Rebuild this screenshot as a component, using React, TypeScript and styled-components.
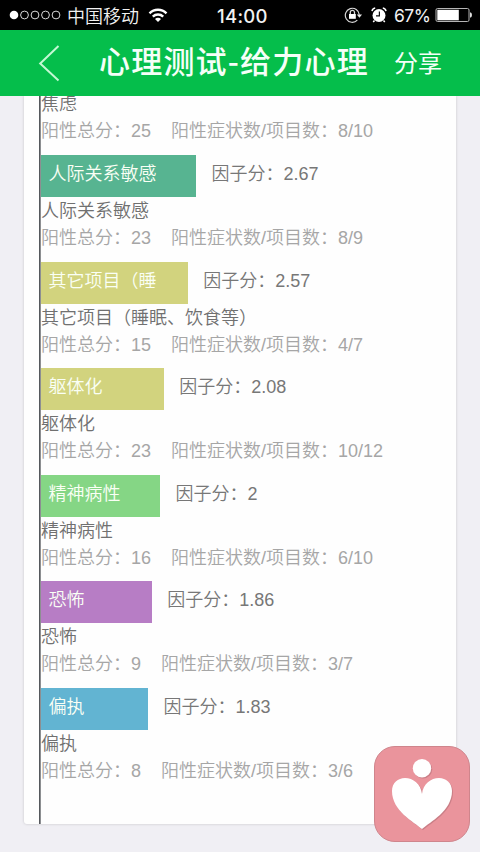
import React from 'react';
import styled, { createGlobalStyle } from 'styled-components';

const GlobalStyle = createGlobalStyle`
  * { box-sizing: border-box; }
  body {
    margin: 0;
    background: #f0eff4;
    font-family: "Liberation Sans", "Noto Sans CJK SC", sans-serif;
  }
`;

const Screen = styled.div`
  width: 480px;
  height: 852px;
  display: flex;
  flex-direction: column;
  overflow: hidden;
  background: #f0eff4;
`;

const StatusBar = styled.div`
  height: 30px;
  flex: none;
  display: flex;
  align-items: center;
  background: #000;
  color: #f2f2f2;
  font-size: 18px;
  line-height: 30px;
  white-space: nowrap;
`;

const Signal = styled.svg`
  width: 52px;
  height: 12px;
  margin-left: 9px;
`;

const Carrier = styled.span`
  width: 72px;
  margin: -1px 0 0 6px;
  font-family: "Noto Sans CJK SC", sans-serif;
  font-weight: 350;
`;

const Wifi = styled.svg`
  width: 20px;
  height: 15px;
  margin-left: 9px;
`;

const Clock = styled.span`
  width: 52px;
  margin: 1px 0 0 49px;
  font-family: Inter, sans-serif;
  font-weight: 500;
  font-size: 18.5px;
  letter-spacing: 0.3px;
`;

const StatusIcon = styled.svg<{ $gap: number }>`
  width: 18px;
  height: 18px;
  margin-left: ${(p) => p.$gap}px;
`;

const Percent = styled.span`
  width: 36px;
  margin: 2px 0 0 6px;
  font-family: Inter, sans-serif;
  font-size: 17.5px;
  letter-spacing: -0.5px;
`;

const Battery = styled.svg`
  width: 38px;
  height: 16px;
  margin-left: 5px;
`;

const NavBar = styled.header`
  height: 66px;
  flex: none;
  display: flex;
  align-items: center;
  background: #05be4b;
  color: #f5fff8;
  font-family: "Noto Sans CJK SC", sans-serif;
  white-space: nowrap;
`;

const BackIcon = styled.svg`
  width: 22px;
  height: 38px;
  margin-left: 38px;
`;

const Title = styled.h1`
  width: 270px;
  margin: -7px 0 0 39px;
  font-size: 31px;
  font-weight: 500;
  line-height: 40px;
  letter-spacing: 1.2px;
`;

const Share = styled.span`
  margin: -2px 0 0 25px;
  font-size: 24px;
  line-height: 36px;
`;

const Content = styled.main`
  flex: 1;
  min-height: 0;
  padding: 0 24px 27px;
  overflow: hidden;
`;

const Card = styled.section`
  height: 728px;
  padding-left: 15px;
  background: #fefefe;
  border-radius: 0 0 3px 3px;
  box-shadow: 0 0 3px rgba(0, 0, 0, 0.18);
`;

const Chart = styled.div`
  height: 728px;
  padding-left: 1px;
  border-left: 1px solid #55585d;
  box-shadow: inset 1px 0 #8d8f92;
  overflow: hidden;
`;

const Factor = styled.article<{ $clipped?: boolean }>`
  height: 106.6px;
  margin-top: ${(p) => (p.$clipped ? '-47.6px' : '0')};
  font-size: 18px;
  font-weight: 350;
  white-space: pre;
`;

const BarRow = styled.div`
  height: 42px;
  display: flex;
`;

const Bar = styled.div<{ $width: number; $color: string }>`
  width: ${(p) => p.$width}px;
  height: 42px;
  padding-left: 7.5px;
  background: ${(p) => p.$color};
  color: #fafff5;
  line-height: 38px;
`;

const Score = styled.span`
  margin-left: 15px;
  color: #777;
  line-height: 38px;
`;

const Name = styled.div`
  height: 27px;
  color: #707070;
  line-height: 29px;
`;

const Detail = styled.div`
  height: 27px;
  color: #a6a6a6;
  line-height: 29px;
`;

const FloatingButton = styled.button`
  position: absolute;
  left: 374px;
  top: 746px;
  width: 96px;
  height: 96px;
  padding: 0;
  border: 1px solid #cf858c;
  border-radius: 21px;
  background: #ea949c;
  svg { display: block; width: 94px; height: 94px; }
`;

interface FactorData {
  name: string;
  label: string;
  score: string;
  total: number;
  items: string;
  width: number;
  color: string;
}

const factors: FactorData[] = [
  { name: '人际关系敏感', label: '人际关系敏感', score: '2.67', total: 23, items: '8/9', width: 155.4, color: '#57b491' },
  { name: '其它项目（睡眠、饮食等）', label: '其它项目（睡', score: '2.57', total: 15, items: '4/7', width: 147.2, color: '#d2d37e' },
  { name: '躯体化', label: '躯体化', score: '2.08', total: 23, items: '10/12', width: 123.2, color: '#d2d37e' },
  { name: '精神病性', label: '精神病性', score: '2', total: 16, items: '6/10', width: 119.4, color: '#85d685' },
  { name: '恐怖', label: '恐怖', score: '1.86', total: 9, items: '3/7', width: 111.2, color: '#b77dc5' },
  { name: '偏执', label: '偏执', score: '1.83', total: 8, items: '3/6', width: 107.4, color: '#62b4d2' },
];

const anxiety: FactorData = {
  name: '焦虑', label: '', score: '', total: 25, items: '8/10', width: 0, color: 'transparent',
};

function FactorBlock({ data, clipped }: { data: FactorData; clipped?: boolean }) {
  return (
    <Factor $clipped={clipped}>
      <BarRow>
        {data.label && (
          <>
            <Bar $width={data.width} $color={data.color}>{data.label}</Bar>
            <Score>因子分：{data.score}</Score>
          </>
        )}
      </BarRow>
      <Name>{data.name}</Name>
      <Detail>{`阳性总分：${data.total}    阳性症状数/项目数：${data.items}`}</Detail>
    </Factor>
  );
}

export default function App() {
  return (
    <Screen>
      <GlobalStyle />
      <StatusBar>
        <Signal viewBox="0 0 52 12" fill="none" stroke="#d8d8d8">
          <circle cx="5" cy="6" r="4.3" fill="#fff" stroke="none" />
          {[15.5, 26, 36.5, 47].map((x) => <circle key={x} cx={x} cy="6" r="3.9" />)}
        </Signal>
        <Carrier>中国移动</Carrier>
        <Wifi viewBox="0 0 20 15" fill="none" stroke="#fff" strokeWidth="2.4">
          <path d="M1.5 5.3A12 12 0 0 1 18.5 5.3" />
          <path d="M4.8 8.6A7.4 7.4 0 0 1 15.2 8.6" />
          <path d="M7 10.9A4.2 4.2 0 0 1 13 10.9L10 14Z" fill="#fff" stroke="none" />
        </Wifi>
        <Clock>14:00</Clock>
        <StatusIcon $gap={75} viewBox="0 0 18 18" fill="none" stroke="#d8d8d8">
          <path d="M13.3 14.2A7 7 0 1 1 15.3 8.8" strokeWidth="1.2" />
          <path d="M12.8 8.5H18L15.4 11.8Z" fill="#e8e8e8" stroke="none" />
          <rect x="5" y="8" width="6.8" height="4.8" fill="#fff" stroke="none" />
          <path d="M6.3 8V6.4A2.1 2.1 0 0 1 10.5 6.4V8" strokeWidth="1.3" />
        </StatusIcon>
        <StatusIcon $gap={8} viewBox="0 0 18 18">
          <circle cx="9" cy="9.5" r="6.5" fill="#fff" />
          <path d="M2 5.2A4 4 0 0 1 5.2 2M12.8 2A4 4 0 0 1 16 5.2M4.5 14.5L3.2 16M13.5 14.5L14.8 16" fill="none" stroke="#fff" strokeWidth="1.5" />
          <path d="M9.4 5.5V9.8H6" fill="none" stroke="#111" strokeWidth="1.2" />
        </StatusIcon>
        <Percent>67%</Percent>
        <Battery viewBox="0 0 38 16">
          <rect x="1" y="1.5" width="33" height="13" rx="1.5" fill="none" stroke="#b5b5b5" />
          <rect x="2.3" y="2.8" width="21.5" height="10.5" fill="#fff" />
          <path d="M35 5.3Q37 5.6 37 8T35 10.8Z" fill="#ddd" />
        </Battery>
      </StatusBar>
      <NavBar>
        <BackIcon viewBox="0 0 22 38">
          <path d="M20.5 2L2.2 19.5L20.5 36.5" fill="none" stroke="#c5f8d4" strokeWidth="2" />
        </BackIcon>
        <Title>心理测试-给力心理</Title>
        <Share>分享</Share>
      </NavBar>
      <Content>
        <Card>
          <Chart>
            <FactorBlock data={anxiety} clipped />
            {factors.map((f) => <FactorBlock key={f.name} data={f} />)}
          </Chart>
        </Card>
      </Content>
      <FloatingButton aria-label="心理">
        <svg viewBox="0 0 94 94">
          <g fill="#b9737b" opacity="0.65" transform="translate(1 1)">
            <circle cx="47" cy="21.2" r="9.2" />
            <path d="M47 82C39 75 17 64 17 44C17 36 23 31 30 31C38 31 46 37 47 47C48 37 56 31 64 31C71 31 77 36 77 44C77 64 55 75 47 82Z" />
          </g>
          <g fill="#fff">
            <circle cx="47" cy="21.2" r="9.2" />
            <path d="M47 82C39 75 17 64 17 44C17 36 23 31 30 31C38 31 46 37 47 47C48 37 56 31 64 31C71 31 77 36 77 44C77 64 55 75 47 82Z" />
          </g>
        </svg>
      </FloatingButton>
    </Screen>
  );
}
